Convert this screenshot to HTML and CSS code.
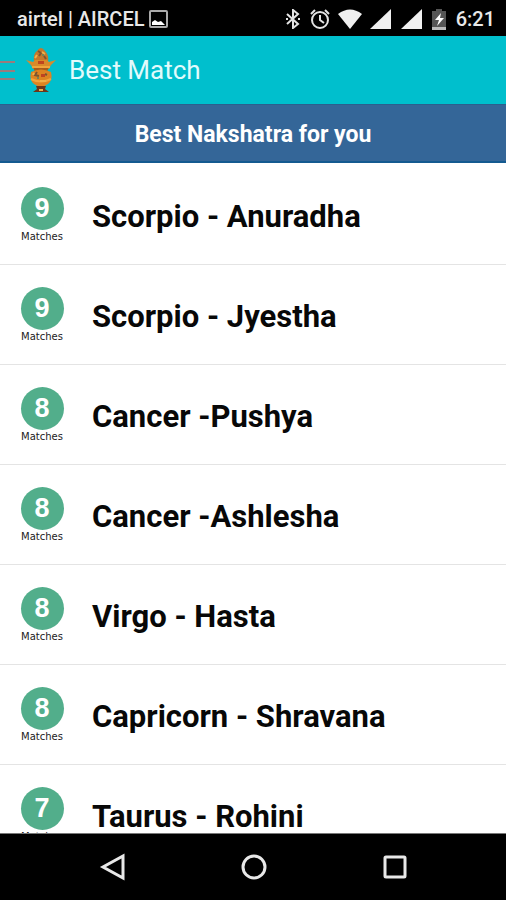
FILE: index.html
```html
<!DOCTYPE html>
<html lang="en">
<head>
<meta charset="utf-8">
<meta name="viewport" content="width=device-width, initial-scale=1">
<title>Best Match</title>
<link rel="stylesheet" href="styles.css">
</head>
<body>
<div class="status">
  <span class="carrier">airtel | AIRCEL</span>
  <svg class="photo" width="20" height="18" viewBox="0 0 20 18"><rect x="1" y="1" width="17" height="16" rx="1" fill="none" stroke="#aaa" stroke-width="2"/><path d="M3 15v-3l3-2 3 2 3-1 4 4z" fill="#fff"/></svg>
  <div class="indicators">
    <svg width="14" height="20" viewBox="0 0 14 20"><path d="M1 5l11 10-5 4V1l5 4L1 15" fill="none" stroke="#e4e4e4" stroke-width="2"/><path d="M0 9h2v2H0zM12 9h2v2h-2z" fill="#e4e4e4"/></svg>
    <svg width="20" height="20" viewBox="0 0 20 20"><g fill="none" stroke="#e4e4e4" stroke-width="2"><circle cx="10" cy="11" r="8"/><path d="M10 6v5l4 3M1 5l4-4M19 5l-4-4"/></g></svg>
    <svg class="wifi" width="26" height="20" viewBox="0 0 26 20"><path d="M1 5Q13-4 25 5L13 20z" fill="#f0f0f0"/></svg>
    <svg width="21" height="20" viewBox="0 0 21 20"><path d="M21 0v20H0z" fill="#f0f0f0"/></svg>
    <svg width="21" height="20" viewBox="0 0 21 20"><path d="M21 0v20H0z" fill="#f0f0f0"/></svg>
    <svg width="14" height="21" viewBox="0 0 14 21"><path d="M0 2h4V0h6v2h4v19H0z" fill="#555"/><path d="M0 18h14v3H0z" fill="#bbb"/><path d="M9 4l-6 7h4l-2 6 7-8H8z" fill="#fff"/></svg>
    <span class="clock">6:21</span>
  </div>
</div>
<header class="appbar">
  <button class="menu" aria-label="Menu"><svg width="15" height="24" viewBox="0 0 15 24"><path d="M0 4h15M0 13h15M0 21h15" stroke="#9a7b7c" stroke-width="2"/></svg></button>
  <svg class="logo" width="32" height="46" viewBox="0 0 32 46">
    <path d="M9 14Q8 7 12 4q4-6 8 0 4 4 3 10z" fill="#c4782c"/>
    <path d="M1 13l7 2 2-2h12l2 2 7-2-5 5-2 4H8l-2-4z" fill="#d98a2a"/>
    <path d="M8 20h16l-2 5H10z" fill="#a85c1c"/>
    <path d="M6 25Q16 20 26 25q2 8-3 12-7 5-14 0-5-4-3-12z" fill="#dd8422"/>
    <path d="M11 39h10l-1 3 4 3H8l4-3z" fill="#6b351a"/>
    <path d="M7 20h18M6 32q10 5 20 0" fill="none" stroke="#f0a43c" stroke-width="2"/>
    <path d="M13 4l3 2-2 3M19 9l2 3M12 25l-2 3 4 1M20 27l2 1" fill="none" stroke="#7c5530" stroke-width="2"/>
    <path d="M13 14h6v3h-6zM16 27h4v3h-4z" fill="#c04420"/>
    <path d="M10 11l2-3M17 5l3 2M8 28l1-2M15 34h6M14 43h4" stroke="#efb04a" stroke-width="2"/>
    <path d="M17 7h2v2h-2zM12 30h2v2h-2z" fill="#778253"/>
  </svg>
  <h1>Best Match</h1>
</header>
<h2 class="banner">Best Nakshatra for you</h2>
<main>
  <ul class="list">
    <li><div class="score"><b>9</b><span>Matches</span></div><p>Scorpio - Anuradha</p></li>
    <li><div class="score"><b>9</b><span>Matches</span></div><p>Scorpio - Jyestha</p></li>
    <li><div class="score"><b>8</b><span>Matches</span></div><p>Cancer -Pushya</p></li>
    <li><div class="score"><b>8</b><span>Matches</span></div><p>Cancer -Ashlesha</p></li>
    <li><div class="score"><b>8</b><span>Matches</span></div><p>Virgo - Hasta</p></li>
    <li><div class="score"><b>8</b><span>Matches</span></div><p>Capricorn - Shravana</p></li>
    <li><div class="score"><b>7</b><span>Matches</span></div><p>Taurus - Rohini</p></li>
  </ul>
</main>
<nav class="navbar">
  <button aria-label="Back"><svg width="28" height="28" viewBox="0 0 28 28"><path d="M24 3v22L4 14z"/></svg></button>
  <button aria-label="Home"><svg width="28" height="28" viewBox="0 0 28 28"><circle cx="14" cy="14" r="11"/></svg></button>
  <button aria-label="Recent apps"><svg width="28" height="28" viewBox="0 0 28 28"><rect x="4" y="4" width="20" height="20" rx="1"/></svg></button>
</nav>
</body>
</html>
```
FILE: styles.css
```css
* { box-sizing: border-box; margin: 0; }
body {
  display: flex;
  flex-direction: column;
  height: 100vh;
  overflow: hidden;
  background: #fff;
  font-family: Roboto, sans-serif;
}
svg { display: block; flex: none; }
button { padding: 0; border: 0; background: none; }
.status {
  display: flex;
  align-items: center;
  flex: none;
  height: 36px;
  padding: 2px 11px 0 17px;
  background: #000;
  color: #e8e8e8;
  font-size: 20px;
  font-weight: 500;
}
.photo { margin-left: 4px; }
.indicators {
  display: flex;
  align-items: center;
  gap: 10px;
  margin-left: auto;
}
.wifi { margin: 0 -3px; }
.appbar {
  display: flex;
  align-items: center;
  flex: none;
  height: 68px;
  background: #00bfcd;
  color: #e2fbfc;
}
.logo { margin: 0 12px 0 10px; }
h1 { font-size: 26px; font-weight: 400; }
.banner {
  flex: none;
  padding: 17px 0 13px;
  border-top: 1px solid #2b5f8e;
  border-bottom: 2px solid #145a90;
  background: #346698;
  color: #fff;
  font-size: 23px;
  font-weight: 700;
  line-height: 26px;
  text-align: center;
}
main {
  flex: 1;
  min-height: 0;
  overflow: hidden;
}
.list { padding: 2px 0 0; list-style: none; }
.list li {
  display: flex;
  align-items: center;
  height: 100px;
  padding: 4px 0 0 20px;
  border-bottom: 1px solid #e4e4e4;
}
.score {
  display: flex;
  flex-direction: column;
  align-items: center;
  width: 44px;
  margin-right: 28px;
  padding-bottom: 4px;
}
.score b {
  width: 43px;
  height: 43px;
  border-radius: 50%;
  background: #52ae8b;
  color: #fff;
  font: 700 27px/43px "Liberation Sans", sans-serif;
  text-align: center;
}
.score span {
  color: #222;
  font: 10px/13px "DejaVu Sans", sans-serif;
}
.list p {
  color: #080808;
  font-size: 31px;
  font-weight: 700;
  line-height: 40px;
  white-space: nowrap;
}
.navbar {
  display: flex;
  align-items: center;
  justify-content: center;
  gap: 113px;
  flex: none;
  height: 67px;
  padding-left: 2px;
  border-top: 1px solid #777;
  background: #000;
}
.navbar svg { fill: none; stroke: #e8e8e8; stroke-width: 3; }
```
